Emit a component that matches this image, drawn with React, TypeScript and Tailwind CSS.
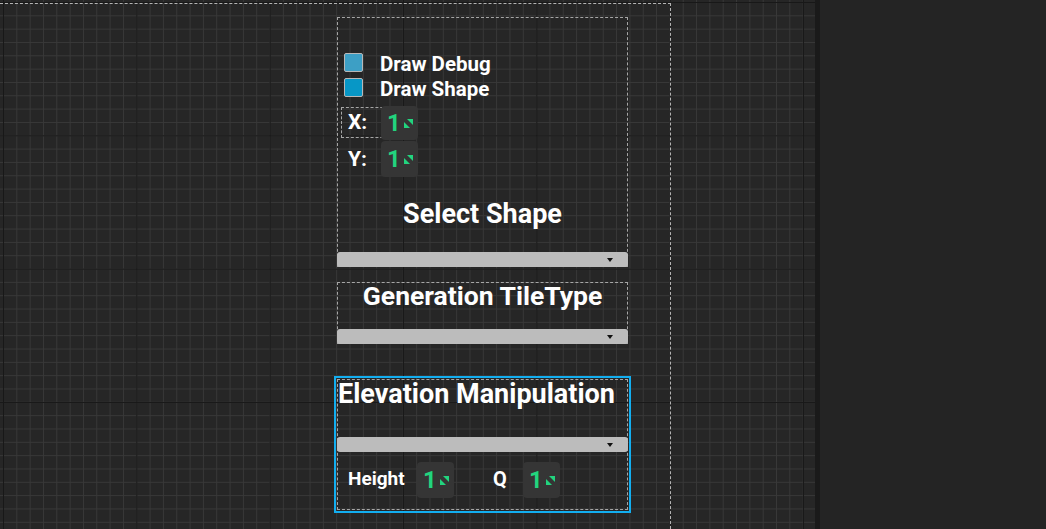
const Arrow = () => (
  <svg width="9" height="9" viewBox="0 0 9 9" className="shrink-0">
    <polygon points="3,0 9,0 9,6" fill="#22d47e" />
    <polygon points="0,3 0,9 6,9" fill="#22d47e" />
  </svg>
);

const SpinBox = ({ h }: { h: string }) => (
  <div className={`flex w-[37px] ${h} shrink-0 items-center justify-between rounded-[4px] bg-[#353535] pl-[6px] pr-[5px]`}>
    <span className="text-[24px] leading-none font-bold text-[#22d47e]">1</span>
    <Arrow />
  </div>
);

const Dropdown = () => (
  <div className="-mx-px -mb-px mt-auto flex h-[15px] items-center justify-end rounded-[3px] bg-[#bcbcbc] pr-[15px]">
    <svg width="6" height="4" viewBox="0 0 6 4">
      <polygon points="0,0 6,0 3,4" fill="#111" />
    </svg>
  </div>
);

const CheckRow = ({ label, color }: { label: string; color: string }) => (
  <div className="flex h-[19px] items-start gap-[17px] pl-[6px]">
    <div className={`h-[19px] w-[19px] rounded-[2px] border border-[#b8b8b8] ${color}`} />
    <span className="mt-[1px] text-[20.5px] leading-[20px] font-bold">{label}</span>
  </div>
);

export default function App() {
  return (
    <div className="flex h-[529px] w-[1046px] overflow-hidden font-['Roboto',sans-serif] text-white">
      <div className="h-full w-[815px] shrink-0 bg-[#262626] bg-[image:linear-gradient(to_right,#181818_1px,transparent_1px),linear-gradient(to_bottom,#181818_1px,transparent_1px),linear-gradient(to_right,#383838_1px,transparent_1px),linear-gradient(to_bottom,#383838_1px,transparent_1px)] bg-[size:133.333px_133.333px,133.333px_133.333px,13.3333px_13.3333px,13.3333px_13.3333px] bg-[position:3px_2px]">
        <div className="mt-[3px] h-[526px] w-[671px] border-t border-r border-dashed border-[#b4b4b4] pl-[337px] pt-[13px]">
          <div className="flex w-[291px] flex-col">
            {/* options box */}
            <div className="flex h-[250px] flex-col border border-dashed border-[#a6a6a6] pt-[35px]">
              <div className="flex flex-col gap-[6px]">
                <CheckRow label="Draw Debug" color="bg-[#3d9fc5]" />
                <CheckRow label="Draw Shape" color="bg-[#0797c6]" />
              </div>
              <div className="mt-[10px] ml-[3px] flex items-start">
                <div className="flex h-[31px] w-[62px] items-center border border-dashed border-[#a6a6a6] pl-[6px]">
                  <span className="text-[21px] leading-none font-bold">X:</span>
                </div>
                <div className="-mt-px ml-[-22px]">
                  <SpinBox h="h-[34px]" />
                </div>
              </div>
              <div className="mt-px flex items-center pl-[10px]">
                <span className="w-[33px] text-[21px] leading-none font-bold">Y:</span>
                <SpinBox h="h-[36px]" />
              </div>
              <div className="mt-[21px] text-center text-[27px] leading-[32px] font-bold">Select Shape</div>
              <Dropdown />
            </div>

            {/* tile type box */}
            <div className="mt-[15px] flex h-[62px] flex-col border border-dashed border-[#a6a6a6]">
              <div className="text-center text-[26.5px] leading-[26px] font-bold">Generation TileType</div>
              <Dropdown />
            </div>

            {/* elevation box */}
            <div className="mt-[35px] flex h-[131px] flex-col border border-dashed border-[#a6a6a6] outline-2 outline-offset-1 outline-[#12aef0]">
              <div className="text-[27px] leading-[28px] font-bold">Elevation Manipulation</div>
              <div className="mt-[28px] flex h-[15px] flex-col">
                <Dropdown />
              </div>
              <div className="mt-[11px] flex items-center pl-[10px]">
                <span className="mb-[3px] w-[69px] text-[19px] leading-none font-bold">Height</span>
                <SpinBox h="h-[36px]" />
                <span className="mb-[3px] ml-[39px] w-[30px] text-[20px] leading-none font-bold">Q</span>
                <SpinBox h="h-[36px]" />
              </div>
            </div>
          </div>
        </div>
      </div>
      <div className="h-full w-[5px] shrink-0 bg-[#1a1a1a]" />
      <div className="h-full flex-1 bg-[#242424]" />
    </div>
  );
}
